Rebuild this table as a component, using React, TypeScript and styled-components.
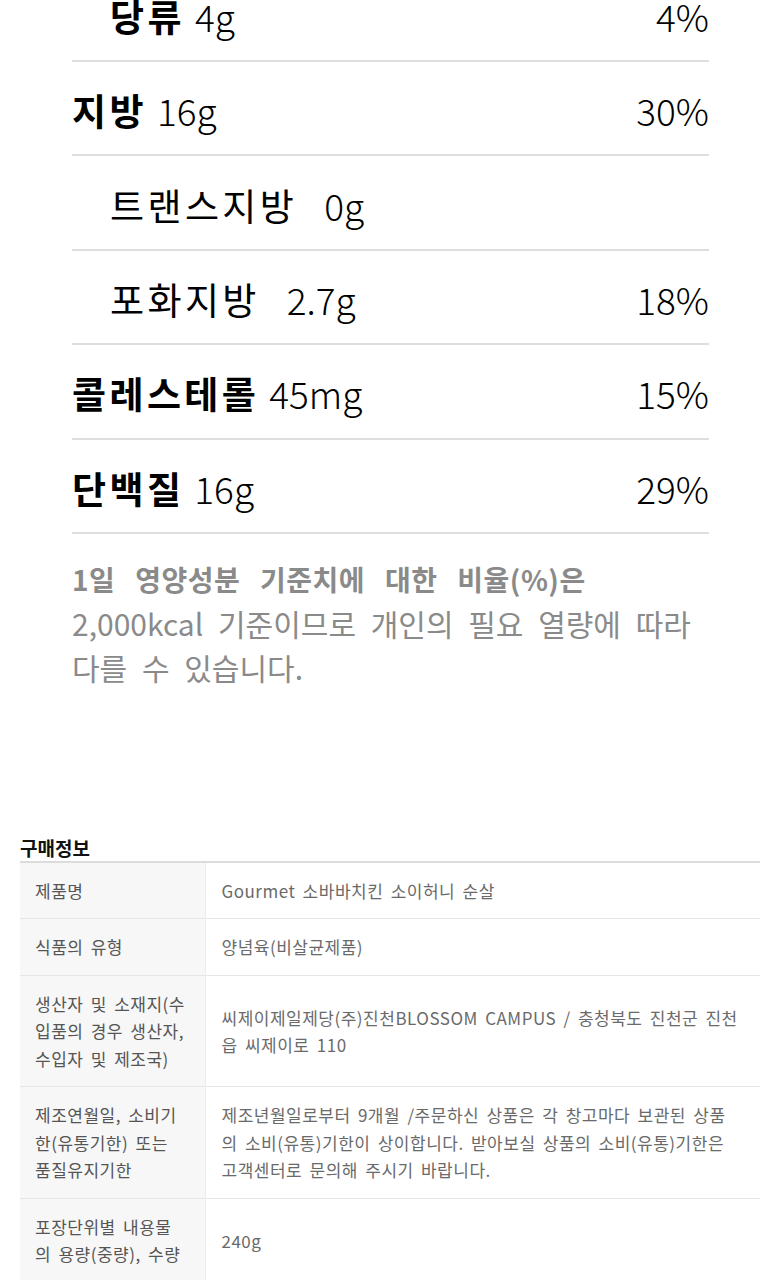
import React from "react";
import styled, { createGlobalStyle } from "styled-components";

const Global = createGlobalStyle`
  html, body { margin: 0; padding: 0; background: #fff; }
  body { font-family: "Noto Sans CJK KR", "Noto Sans", sans-serif; color: #000; }
  * { box-sizing: border-box; }
`;

const Page = styled.div`
  width: 780px;
  overflow: hidden;
`;

const NutritionList = styled.div`
  margin: -32.4px 71px 0 72px;
  display: flex;
  flex-direction: column;
`;

const NutRow = styled.div`
  height: 94.4px;
  display: flex;
  align-items: center;
  justify-content: space-between;
  border-bottom: 2px solid #dedede;
  padding-top: 5px;
  font-size: 37px;
  line-height: 1;
`;

const NutLeft = styled.div<{ $indent: boolean }>`
  display: flex;
  align-items: baseline;
  padding-left: ${(p) => (p.$indent ? "38px" : "0")};
`;

const NutName = styled.span<{ $bold: boolean }>`
  font-weight: ${(p) => (p.$bold ? 700 : 400)};
  letter-spacing: 3.4px;
`;

const NutAmount = styled.span<{ $wide: boolean }>`
  font-weight: 300;
  margin-left: ${(p) => (p.$wide ? "27px" : "10px")};
`;

const NutPct = styled.span`
  font-weight: 300;
`;

const Note = styled.div`
  margin: 23px 72px 0 72px;
  color: #8a8a8a;
  line-height: 44px;
`;

const NoteStrong = styled.div`
  font-size: 28px;
  font-weight: 700;
  letter-spacing: 0.5px;
  word-spacing: 13px;
`;

const NoteLine = styled.div`
  font-size: 30px;
  font-weight: 400;
  word-spacing: 8px;
`;

const InfoSection = styled.section`
  margin: 146px 20px 0 20px;
`;

const InfoTitle = styled.h3`
  margin: 0 0 1px 0;
  font-size: 19px;
  line-height: 25px;
  font-weight: 700;
  color: #111;
`;

const InfoTable = styled.table`
  width: 100%;
  table-layout: fixed;
  border-collapse: collapse;
  border-top: 2px solid #dcdcdc;
  font-size: 17px;
  line-height: 27.5px;
  letter-spacing: 0.5px;
  word-spacing: 3px;
`;

const InfoRow = styled.tr`
  border-bottom: 1px solid #e6e6e6;
`;

const LabelCell = styled.th`
  width: 185px;
  background: #f7f7f7;
  border-right: 1px solid #ececec;
  padding: 14px 8px 14px 15px;
  text-align: left;
  vertical-align: middle;
  font-weight: 400;
  color: #555;
  white-space: nowrap;
`;

const ValueCell = styled.td`
  padding: 14px 10px 14px 16px;
  vertical-align: middle;
  color: #6a6a6a;
  white-space: nowrap;
`;

type Nut = { name: string; amount: string; pct?: string; indent: boolean; bold: boolean };

const nutrients: Nut[] = [
  { name: "당류", amount: "4g", pct: "4%", indent: true, bold: true },
  { name: "지방", amount: "16g", pct: "30%", indent: false, bold: true },
  { name: "트랜스지방", amount: "0g", indent: true, bold: false },
  { name: "포화지방", amount: "2.7g", pct: "18%", indent: true, bold: false },
  { name: "콜레스테롤", amount: "45mg", pct: "15%", indent: false, bold: true },
  { name: "단백질", amount: "16g", pct: "29%", indent: false, bold: true },
];

const info: { label: string[]; value: string[] }[] = [
  { label: ["제품명"], value: ["Gourmet 소바바치킨 소이허니 순살"] },
  { label: ["식품의 유형"], value: ["양념육(비살균제품)"] },
  {
    label: ["생산자 및 소재지(수", "입품의 경우 생산자,", "수입자 및 제조국)"],
    value: ["씨제이제일제당(주)진천BLOSSOM CAMPUS / 충청북도 진천군 진천", "읍 씨제이로 110"],
  },
  {
    label: ["제조연월일, 소비기", "한(유통기한) 또는", "품질유지기한"],
    value: [
      "제조년월일로부터 9개월 /주문하신 상품은 각 창고마다 보관된 상품",
      "의 소비(유통)기한이 상이합니다. 받아보실 상품의 소비(유통)기한은",
      "고객센터로 문의해 주시기 바랍니다.",
    ],
  },
  { label: ["포장단위별 내용물", "의 용량(중량), 수량"], value: ["240g"] },
];

const Lines = ({ lines }: { lines: string[] }) => (
  <>
    {lines.map((l, i) => (
      <React.Fragment key={i}>
        {i > 0 && <br />}
        {l}
      </React.Fragment>
    ))}
  </>
);

export default function App() {
  return (
    <Page>
      <Global />
      <NutritionList>
        {nutrients.map((n) => (
          <NutRow key={n.name}>
            <NutLeft $indent={n.indent}>
              <NutName $bold={n.bold}>{n.name}</NutName>
              <NutAmount $wide={!n.bold}>{n.amount}</NutAmount>
            </NutLeft>
            {n.pct && <NutPct>{n.pct}</NutPct>}
          </NutRow>
        ))}
      </NutritionList>
      <Note>
        <NoteStrong>1일 영양성분 기준치에 대한 비율(%)은</NoteStrong>
        <NoteLine>2,000kcal 기준이므로 개인의 필요 열량에 따라</NoteLine>
        <NoteLine>다를 수 있습니다.</NoteLine>
      </Note>
      <InfoSection>
        <InfoTitle>구매정보</InfoTitle>
        <InfoTable>
          <tbody>
            {info.map((r, i) => (
              <InfoRow key={i}>
                <LabelCell>
                  <Lines lines={r.label} />
                </LabelCell>
                <ValueCell>
                  <Lines lines={r.value} />
                </ValueCell>
              </InfoRow>
            ))}
          </tbody>
        </InfoTable>
      </InfoSection>
    </Page>
  );
}
